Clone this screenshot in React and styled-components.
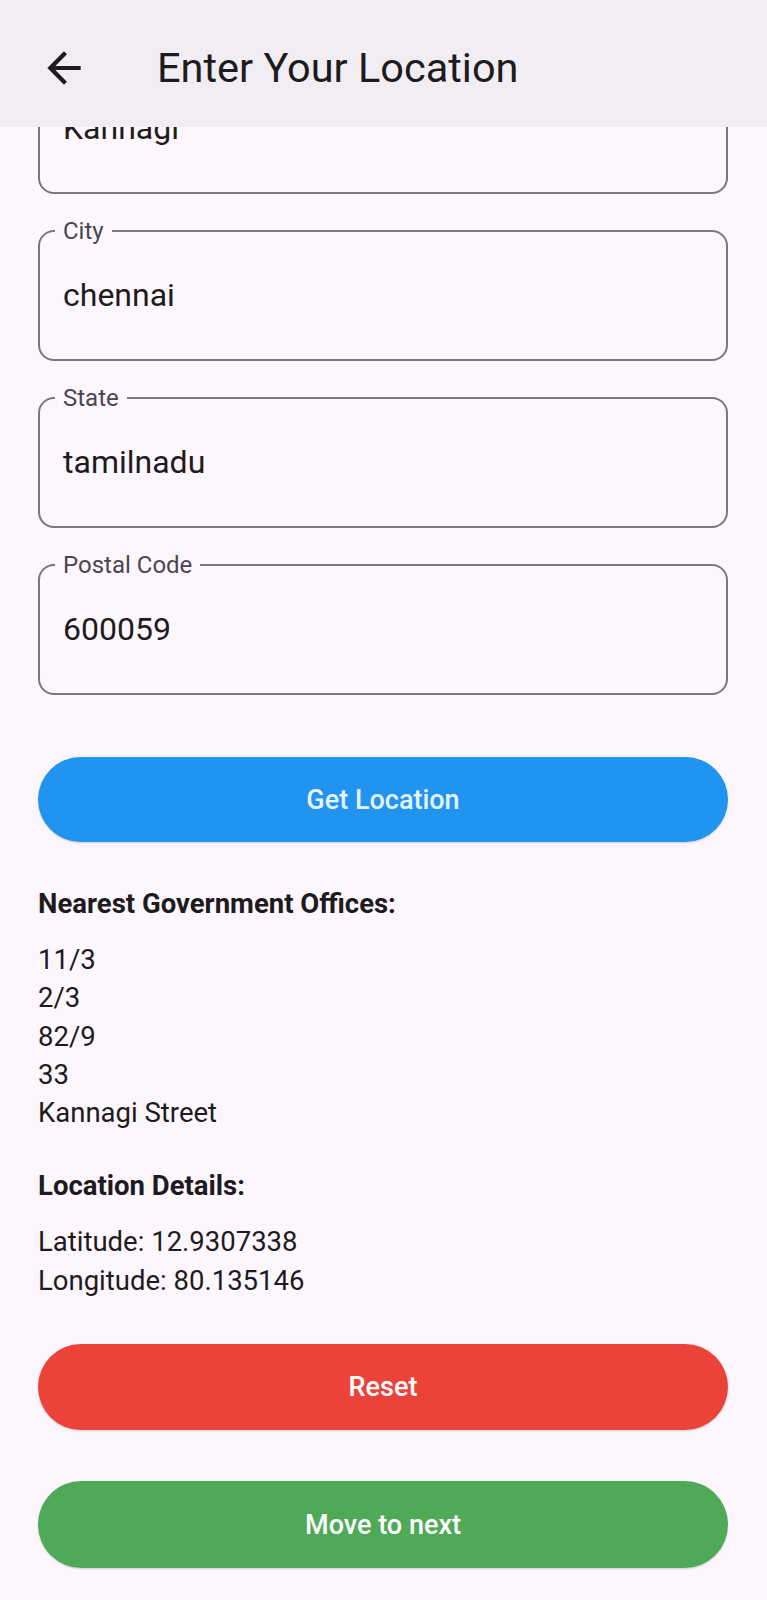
import React from "react";
import styled, { createGlobalStyle } from "styled-components";

const GlobalStyle = createGlobalStyle`
  html, body {
    margin: 0;
    padding: 0;
    background: #fdf7fd;
    font-family: Roboto, "Noto Sans", Arial, sans-serif;
  }
  * { box-sizing: border-box; }
`;

const Screen = styled.div`
  width: 767px;
  height: 1600px;
  display: flex;
  flex-direction: column;
  overflow: hidden;
  background: #fdf7fd;
`;

const AppBar = styled.header`
  flex: 0 0 127px;
  height: 127px;
  background: #f1edf3;
  display: flex;
  align-items: center;
  padding: 8px 0 0 39px;
  position: relative;
  z-index: 2;
`;

const BackButton = styled.div`
  width: 50px;
  height: 50px;
  display: flex;
  align-items: center;
  justify-content: center;
  color: #1d1b20;
`;

const Title = styled.h1`
  margin: 0 0 0 68px;
  font-size: 41.5px;
  font-weight: 400;
  color: #1d1b20;
  letter-spacing: 0;
  line-height: 50px;
  white-space: nowrap;
`;

const Scroller = styled.main`
  flex: 1;
  overflow: hidden;
`;

const Content = styled.div`
  margin-top: ${(p) => -p.$offset}px;
  padding: 0 39px 0 38px;
  display: flex;
  flex-direction: column;
`;

const FieldList = styled.div`
  display: flex;
  flex-direction: column;
  gap: 36px;
`;

const Field = styled.div`
  position: relative;
  height: 131px;
  border: 2px solid #7b767f;
  border-radius: 16px;
  display: flex;
  align-items: center;
  padding-left: 23px;
`;

const FieldLabel = styled.span`
  position: absolute;
  top: -14px;
  left: 15px;
  padding: 0 8px;
  background: #fdf7fd;
  font-size: 24px;
  line-height: 26px;
  color: #4a4650;
`;

const FieldValue = styled.span`
  font-size: 32px;
  color: #1d1b20;
  line-height: 1.2;
`;

const PillButton = styled.button`
  width: 100%;
  height: ${(p) => p.$h || 85}px;
  margin-top: ${(p) => p.$mt}px;
  border: none;
  border-radius: 999px;
  background: ${(p) => p.$bg};
  color: ${(p) => p.$fg || "#ffffff"};
  font-family: Roboto, "Noto Sans", Arial, sans-serif;
  font-size: 27px;
  font-weight: 500;
  display: flex;
  align-items: center;
  justify-content: center;
  padding: 0;
  box-shadow: 0 1px 2px rgba(0, 0, 0, 0.18);
`;

const SectionTitle = styled.div`
  margin-top: ${(p) => p.$mt}px;
  margin-bottom: 18px;
  font-size: 27.5px;
  line-height: 38px;
  font-weight: 700;
  color: #1d1b20;
`;

const Line = styled.div`
  font-size: 27.5px;
  line-height: 38.3px;
  color: #1d1b20;
`;

const ArrowBack = () => (
  <svg width="50" height="50" viewBox="0 0 24 24" fill="currentColor">
    <path d="M20 11H7.83l5.59-5.59L12 4l-8 8 8 8 1.41-1.41L7.83 13H20v-2z" />
  </svg>
);

const fields = [
  { label: "Street", value: "Kannagi" },
  { label: "City", value: "chennai" },
  { label: "State", value: "tamilnadu" },
  { label: "Postal Code", value: "600059" },
];

const offices = ["11/3", "2/3", "82/9", "33", "Kannagi Street"];

export default function App() {
  return (
    <>
      <GlobalStyle />
      <Screen>
        <AppBar>
          <BackButton>
            <ArrowBack />
          </BackButton>
          <Title>Enter Your Location</Title>
        </AppBar>
        <Scroller>
          <Content $offset={64}>
            <FieldList>
              {fields.map((f) => (
                <Field key={f.label}>
                  <FieldLabel>{f.label}</FieldLabel>
                  <FieldValue>{f.value}</FieldValue>
                </Field>
              ))}
            </FieldList>

            <PillButton $mt={62} $bg="#2194ef" $fg="#e6f2fd">
              Get Location
            </PillButton>

            <SectionTitle $mt={43}>Nearest Government Offices:</SectionTitle>
            {offices.map((o) => (
              <Line key={o}>{o}</Line>
            ))}

            <SectionTitle $mt={35}>Location Details:</SectionTitle>
            <Line>Latitude: 12.9307338</Line>
            <Line>Longitude: 80.135146</Line>

            <PillButton $mt={44} $h={86} $bg="#eb4339">
              Reset
            </PillButton>
            <PillButton $mt={51} $h={87} $bg="#4eaa57">
              Move to next
            </PillButton>
          </Content>
        </Scroller>
      </Screen>
    </>
  );
}
